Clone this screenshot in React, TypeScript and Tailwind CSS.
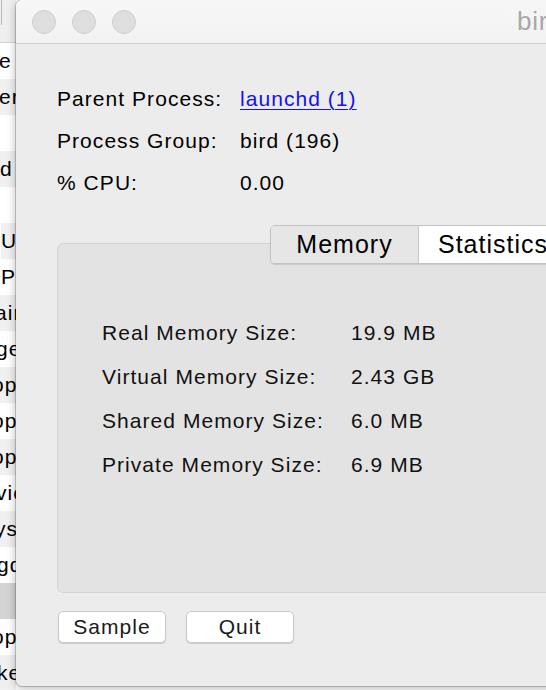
import React from "react";

const stripRows: { t: string; c: string }[] = [
  { t: "e", c: "bg-white -ml-[1px]" },
  { t: "erv", c: "bg-[#f0f0f0] -ml-[1px]" },
  { t: "", c: "bg-white" },
  { t: "d", c: "bg-[#f0f0f0] ml-0" },
  { t: "", c: "bg-white" },
  { t: "U", c: "bg-[#f0f0f0] ml-[1px]" },
  { t: "P", c: "bg-white ml-[1px]" },
  { t: "air", c: "bg-[#f0f0f0] -ml-[5px]" },
  { t: "ge", c: "bg-white -ml-[4px]" },
  { t: "op", c: "bg-[#f0f0f0] -ml-[8px]" },
  { t: "op", c: "bg-white -ml-[8px]" },
  { t: "op", c: "bg-[#f0f0f0] -ml-[8px]" },
  { t: "vic", c: "bg-white -ml-[4px]" },
  { t: "ys", c: "bg-[#f0f0f0] -ml-[5px]" },
  { t: "gd", c: "bg-white -ml-[3px]" },
  { t: "", c: "bg-[#d4d4d4]" },
  { t: "op", c: "bg-white -ml-[8px]" },
  { t: "ke", c: "bg-[#f0f0f0] -ml-[3px]" },
];

const info: [string, string, boolean][] = [
  ["Parent Process:", "launchd (1)", true],
  ["Process Group:", "bird (196)", false],
  ["% CPU:", "0.00", false],
];

const mem: [string, string][] = [
  ["Real Memory Size:", "19.9 MB"],
  ["Virtual Memory Size:", "2.43 GB"],
  ["Shared Memory Size:", "6.0 MB"],
  ["Private Memory Size:", "6.9 MB"],
];

export default function App() {
  return (
    <div className="w-[546px] h-[690px] overflow-hidden bg-white flex font-['Liberation_Sans',Arial,sans-serif] text-black">
      {/* background window strip */}
      <div className="w-[16px] shrink-0 flex flex-col overflow-hidden bg-white">
        <div className="h-[43px] shrink-0 bg-[#efefef] border-b border-[#d2d2d2] flex">
          <div className="w-px h-[25px] bg-[#b9b9b9] ml-px" />
        </div>
        {stripRows.map((r, i) => (
          <div
            key={i}
            className={`h-[36px] shrink-0 flex items-center whitespace-nowrap text-[21px] tracking-[0.05em] ${r.c}`}
          >
            <span>{r.t}</span>
          </div>
        ))}
      </div>

      {/* main window */}
      <div className="w-[600px] shrink-0 h-[686px] flex flex-col bg-[#ececec] rounded-[6px] overflow-hidden shadow-[0_0_0_1px_rgba(0,0,0,0.18),0_2px_10px_rgba(0,0,0,0.3)] relative z-10">
        <div className="h-[44px] shrink-0 border-b border-[#d0d0d0] bg-gradient-to-b from-[#f7f7f7] to-[#f2f2f2] flex items-center pl-[16px]">
          <div className="flex gap-[16px] shrink-0">
            <div className="w-[24px] h-[24px] rounded-full bg-[#dedede] border border-[#d0d0d0]" />
            <div className="w-[24px] h-[24px] rounded-full bg-[#dedede] border border-[#d0d0d0]" />
            <div className="w-[24px] h-[24px] rounded-full bg-[#dedede] border border-[#d0d0d0]" />
          </div>
          <div className="ml-[381px] text-[26px] text-[#a8a8a8] tracking-[0.03em] whitespace-nowrap">
            bird
          </div>
        </div>

        <div className="flex flex-col pl-[41px] pt-[34px]">
          <div className="grid grid-cols-[183px_1fr] auto-rows-[42px] items-center text-[21px] tracking-[0.05em]">
            {info.map(([l, v, link]) => (
              <React.Fragment key={l}>
                <div>{l}</div>
                <div>
                  {link ? (
                    <span className="text-[#1212f2] underline underline-offset-[3px] decoration-1">
                      {v}
                    </span>
                  ) : (
                    v
                  )}
                </div>
              </React.Fragment>
            ))}
          </div>

          <div className="mt-[21px] flex flex-col">
            <div className="relative z-10 flex pl-[213px]">
              <div className="shrink-0 flex h-[39px] border border-[#c2c2c2] rounded-l-[5px] overflow-hidden shadow-[0_1px_1px_rgba(0,0,0,0.12)] text-[25px] tracking-[0.04em] whitespace-nowrap">
                <div className="shrink-0 w-[148px] flex items-center justify-center bg-[#e6e6e6] border-r border-[#c8c8c8]">
                  Memory
                </div>
                <div className="shrink-0 w-[149px] flex items-center justify-center bg-white border-r border-[#d0d0d0]">
                  Statistics
                </div>
                <div className="shrink-0 w-[240px] flex items-center justify-center bg-white">
                  Open Files and Ports
                </div>
              </div>
            </div>
            <div className="-mt-[21px] h-[350px] border border-[#d4d4d4] rounded-[6px] bg-[#e3e3e3] pt-[67px] pl-[44px]">
              <div className="grid grid-cols-[249px_1fr] auto-rows-[44px] items-center text-[21px] tracking-[0.05em] text-[#111]">
                {mem.map(([l, v]) => (
                  <React.Fragment key={l}>
                    <div>{l}</div>
                    <div>{v}</div>
                  </React.Fragment>
                ))}
              </div>
            </div>
          </div>

          <div className="mt-[18px] ml-px flex gap-[20px] text-[21px] tracking-[0.05em] text-[#1a1a1a]">
            <button className="w-[108px] h-[32px] bg-white border border-[#c9c9c9] rounded-[5px] shadow-[0_1px_1px_rgba(0,0,0,0.14)] flex items-center justify-center">
              Sample
            </button>
            <button className="w-[108px] h-[32px] bg-white border border-[#c9c9c9] rounded-[5px] shadow-[0_1px_1px_rgba(0,0,0,0.14)] flex items-center justify-center">
              Quit
            </button>
          </div>
        </div>
      </div>
    </div>
  );
}
